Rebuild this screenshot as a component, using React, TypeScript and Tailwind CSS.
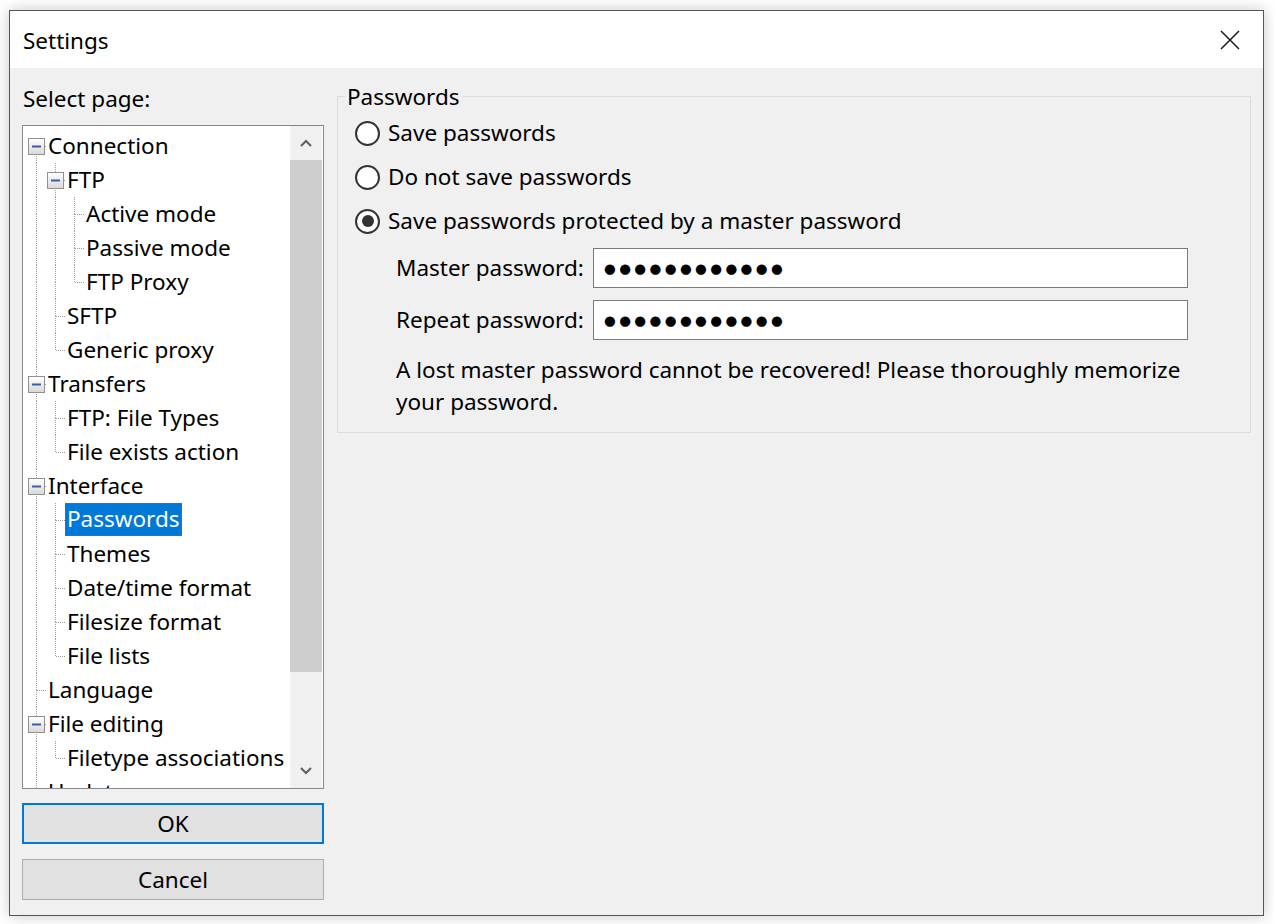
import React from 'react';

type TreeRow = {
  label: string;
  depth: number;
  box?: boolean;
  selected?: boolean;
};

const rows: TreeRow[] = [
  { label: 'Connection', depth: 0, box: true },
  { label: 'FTP', depth: 1, box: true },
  { label: 'Active mode', depth: 2 },
  { label: 'Passive mode', depth: 2 },
  { label: 'FTP Proxy', depth: 2 },
  { label: 'SFTP', depth: 1 },
  { label: 'Generic proxy', depth: 1 },
  { label: 'Transfers', depth: 0, box: true },
  { label: 'FTP: File Types', depth: 1 },
  { label: 'File exists action', depth: 1 },
  { label: 'Interface', depth: 0, box: true },
  { label: 'Passwords', depth: 1, selected: true },
  { label: 'Themes', depth: 1 },
  { label: 'Date/time format', depth: 1 },
  { label: 'Filesize format', depth: 1 },
  { label: 'File lists', depth: 1 },
  { label: 'Language', depth: 0 },
  { label: 'File editing', depth: 0, box: true },
  { label: 'Filetype associations', depth: 1 },
  { label: 'Updates', depth: 0 },
];

// does the node at index i have a later sibling (roots always continue)
function hasNext(i: number): boolean {
  const d = rows[i].depth;
  if (d === 0) return true;
  for (let j = i + 1; j < rows.length; j++) {
    if (rows[j].depth < d) return false;
    if (rows[j].depth === d) return true;
  }
  return false;
}

// ancestor of row i at depth c
function ancestorAt(i: number, c: number): number {
  for (let j = i; j >= 0; j--) {
    if (rows[j].depth === c) return j;
  }
  return -1;
}

const DOT = '#a0a0a0';

function LineCell({ i, col }: { i: number; col: number }) {
  const row = rows[i];
  const own = col === row.depth;
  let top = false;
  let bottom = false;
  if (own) {
    top = i !== 0;
    bottom = hasNext(i);
  } else {
    const a = ancestorAt(i, col);
    top = bottom = a >= 0 && hasNext(a);
  }
  return (
    <svg width="19" height="34" className="shrink-0 block">
      {top && <line x1="9.5" y1="0" x2="9.5" y2="17" stroke={DOT} strokeDasharray="1 1" />}
      {bottom && <line x1="9.5" y1="17" x2="9.5" y2="34" stroke={DOT} strokeDasharray="1 1" />}
      {own && <line x1="10" y1="17.5" x2="19" y2="17.5" stroke={DOT} strokeDasharray="1 1" />}
      {own && row.box && (
        <g>
          <defs>
            <linearGradient id={`bx${i}`} x1="0" y1="0" x2="0" y2="1">
              <stop offset="0" stopColor="#ffffff" />
              <stop offset="1" stopColor="#d8d8d8" />
            </linearGradient>
          </defs>
          <rect x="1.5" y="9.5" width="16" height="16" fill={`url(#bx${i})`} stroke="#919191" />
          <rect x="5" y="16.5" width="9" height="2" fill="#3c5aa5" />
        </g>
      )}
    </svg>
  );
}

function Radio({ checked, label }: { checked?: boolean; label: string }) {
  return (
    <div className="h-[44px] flex items-center">
      <span className="w-[25px] h-[25px] rounded-full border-2 border-[#333] bg-white flex items-center justify-center shrink-0">
        {checked && <span className="w-[12px] h-[12px] rounded-full bg-[#333]" />}
      </span>
      <span className="ml-[8px]">{label}</span>
    </div>
  );
}

function Masked() {
  return (
    <div className="w-[595px] h-[40px] border border-[#7a7a7a] bg-white flex items-center pl-[10px] font-['DejaVu_Sans',sans-serif] text-[13.5px] tracking-[3.4px]">
      ●●●●●●●●●●●●
    </div>
  );
}

export default function App() {
  return (
    <div className="w-[1274px] h-[924px] bg-white overflow-hidden pt-[10px] pl-[9px] font-['Noto_Sans',sans-serif] text-[22.5px] leading-[34px] text-black">
      <div className="w-[1255px] h-[906px] border border-[#555] bg-[#f0f0f0] shadow-[0_0_14px_rgba(0,0,0,0.22)] flex flex-col">
        {/* title bar */}
        <div className="h-[57px] bg-white flex items-center justify-between pl-[13px] pr-[23px] shrink-0">
          <span className="pt-[3px]">Settings</span>
          <svg width="20" height="20" viewBox="0 0 20 20">
            <path d="M1 1 L19 19 M19 1 L1 19" stroke="#1a1a1a" strokeWidth="1.5" />
          </svg>
        </div>

        <div className="flex px-[12px]">
          {/* left column */}
          <div className="w-[302px] shrink-0 flex flex-col">
            <div className="h-[57px] flex items-center pl-[1px] pt-[5px]">Select page:</div>
            <div className="h-[664px] border border-[#828790] bg-white flex">
              <div className="flex-1 overflow-hidden pt-[3px] pl-[4px]">
                {rows.map((r, i) => (
                  <div key={r.label} className="h-[34px] flex items-center whitespace-nowrap">
                    {Array.from({ length: r.depth + 1 }, (_, c) => (
                      <LineCell key={c} i={i} col={c} />
                    ))}
                    {r.selected ? (
                      <span className="px-[2px] h-[33px] -mt-[2px] flex items-center bg-[#0078d7] text-white outline outline-1 outline-dotted outline-[#8a6a30] -outline-offset-1">
                        {r.label}
                      </span>
                    ) : (
                      <span className="px-[2px]">{r.label}</span>
                    )}
                  </div>
                ))}
              </div>
              {/* scrollbar */}
              <div className="w-[32px] mr-[1px] flex flex-col bg-[#f0f0f0]">
                <div className="h-[34px] flex items-center justify-center">
                  <svg width="12" height="8" viewBox="0 0 12 8">
                    <path d="M1 7 L6 2 L11 7" fill="none" stroke="#606060" strokeWidth="2" />
                  </svg>
                </div>
                <div className="h-[512px] bg-[#cdcdcd]" />
                <div className="flex-1" />
                <div className="h-[34px] flex items-center justify-center">
                  <svg width="12" height="8" viewBox="0 0 12 8">
                    <path d="M1 1 L6 6 L11 1" fill="none" stroke="#606060" strokeWidth="2" />
                  </svg>
                </div>
              </div>
            </div>
            <button className="mt-[14px] h-[41px] w-full bg-[#e1e1e1] border-2 border-[#0078d7] flex items-center justify-center">
              OK
            </button>
            <button className="mt-[15px] h-[41px] w-full bg-[#e1e1e1] border border-[#adadad] flex items-center justify-center">
              Cancel
            </button>
          </div>

          {/* right column */}
          <div className="ml-[13px] flex-1">
            <div className="relative mt-[28px] h-[337px] border border-[#dcdcdc] pl-[17px] pt-[14px]">
              <span className="absolute left-[7px] -top-[17px] px-[2px] bg-[#f0f0f0]">Passwords</span>
              <Radio label="Save passwords" />
              <Radio label="Do not save passwords" />
              <Radio checked label="Save passwords protected by a master password" />
              <div className="pl-[41px]">
                <div className="mt-[5px] h-[40px] flex items-center">
                  <span className="w-[197px]">Master password:</span>
                  <Masked />
                </div>
                <div className="mt-[12px] h-[40px] flex items-center">
                  <span className="w-[197px]">Repeat password:</span>
                  <Masked />
                </div>
                <p className="mt-[14px] leading-[32px] whitespace-nowrap">
                  A lost master password cannot be recovered! Please thoroughly memorize
                  <br />
                  your password.
                </p>
              </div>
            </div>
          </div>
        </div>
      </div>
    </div>
  );
}
